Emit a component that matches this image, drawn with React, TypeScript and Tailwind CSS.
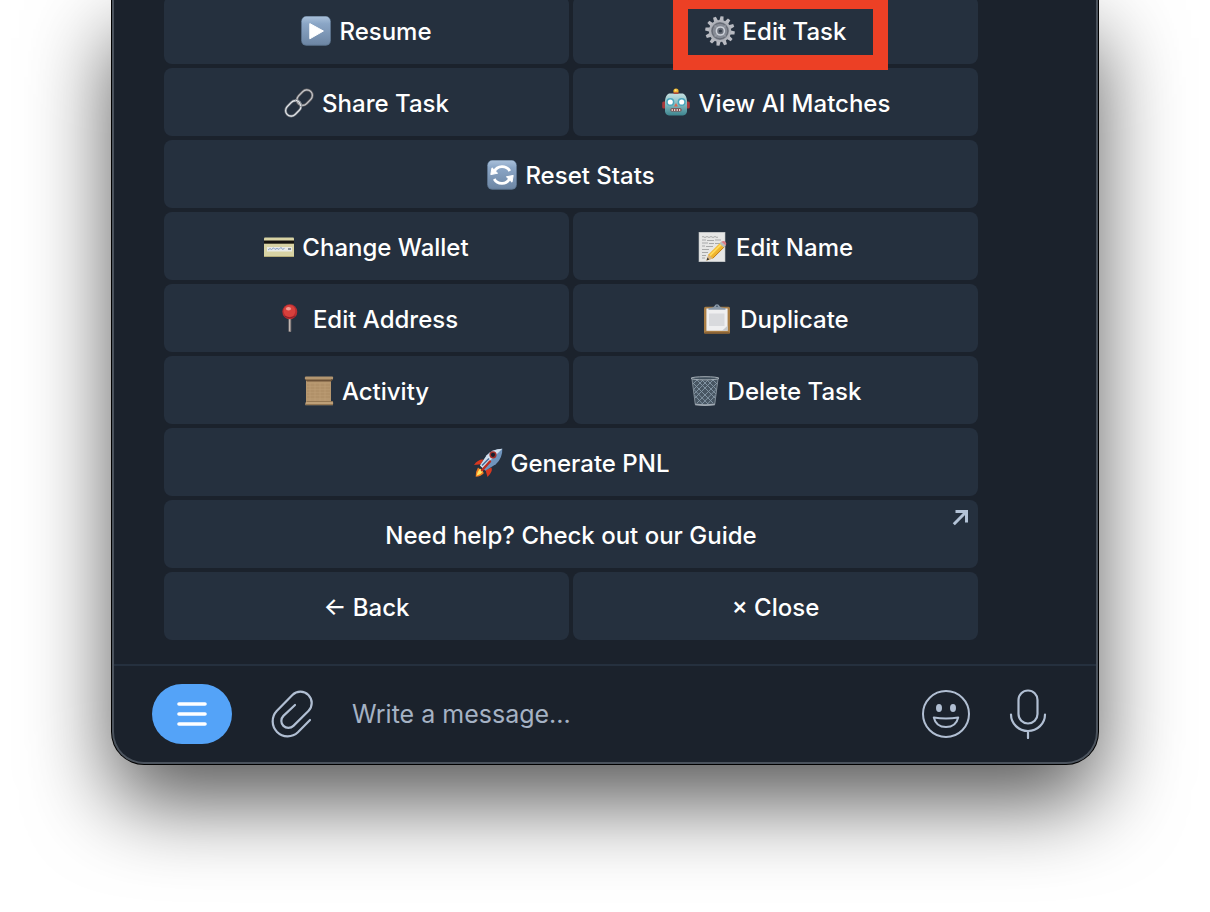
import type { ReactNode } from "react";

const Svg = ({ children }: { children: ReactNode }) => (
  <svg viewBox="0 0 30 30" className="size-[30px] shrink-0" aria-hidden="true">{children}</svg>
);

const BlueTile = ({ id, children }: { id: string; children: ReactNode }) => (
  <Svg>
    <defs>
      <linearGradient id={id} x1="0" y1="0" x2="0" y2="1">
        <stop offset="0" stopColor="#a9c0da" />
        <stop offset="0.25" stopColor="#8ba6c6" />
        <stop offset="1" stopColor="#6d86a4" />
      </linearGradient>
    </defs>
    <rect x="0.2" y="0.2" width="29.6" height="29.6" rx="5" fill="#5d7590" />
    <rect x="0.8" y="0.6" width="28.4" height="28.2" rx="4.6" fill={`url(#${id})`} />
    {children}
  </Svg>
);

const PlayIcon = () => (
  <BlueTile id="tile-play">
    <path d="M8.8 7.6 22.4 15 8.8 22.8Z" fill="#fff" stroke="#fff" strokeWidth="1" strokeLinejoin="round" />
  </BlueTile>
);

const RefreshIcon = () => (
  <BlueTile id="tile-refresh">
    <path d="M7.2 11.6A8.8 8.8 0 0 1 22.8 11M22.8 18.4A8.8 8.8 0 0 1 7.2 19" fill="none" stroke="#fff" strokeWidth="2.8" />
    <path d="M3.8 14.6 5 7.8 10.6 13.2ZM26.2 15.4 25 22.2 19.4 16.8Z" fill="#fff" stroke="#fff" strokeLinejoin="round" />
  </BlueTile>
);

const GearIcon = () => (
  <Svg>
    <g fill="#b9bbc2">
      {[0, 30, 60, 90, 120, 150, 180, 210, 240, 270, 300, 330].map((a) => (
        <path key={a} d="M12.9 5 13.5.2h3l.6 4.8Z" transform={`rotate(${a + 8} 15 15)`} />
      ))}
    </g>
    <circle cx="15" cy="15" r="10" fill="#777c86" stroke="#b0b3ba" strokeWidth="2.2" />
    <circle cx="15" cy="15" r="7.8" fill="#858a94" stroke="#656a74" strokeWidth="1" />
    <path d="m9.6 9.6 3 3m5 5 3 3M9.6 20.400l3-3m5-5 3-3" stroke="#959aa3" strokeWidth="1.4" />
    <circle cx="15.4" cy="15" r="4" fill="#686e79" stroke="#cbd0d8" strokeWidth="1.6" />
    <circle cx="15.4" cy="15" r="1.6" fill="#343e4a" />
  </Svg>
);

const LinkIcon = () => (
  <Svg>
    <g fill="none">
      <rect x="-8.6" y="-5.6" width="17.2" height="11.2" rx="5.6" transform="translate(9.3 20.4) rotate(-46)" stroke="#747a82" strokeWidth="2.6" />
      <rect x="-8.6" y="-5.6" width="17.2" height="11.2" rx="5.6" transform="translate(9.3 20.4) rotate(-46)" stroke="#eceef1" strokeWidth="1.1" />
      <rect x="-8.6" y="-5.6" width="17.2" height="11.2" rx="5.6" transform="translate(20.7 9.600) rotate(-46)" stroke="#6c6869" strokeWidth="2.6" />
      <rect x="-8.6" y="-5.6" width="17.2" height="11.2" rx="5.6" transform="translate(20.7 9.600) rotate(-46)" stroke="#c9ccd1" strokeWidth="1.1" />
      <path d="M11.500 12q5 1.200 5.700 6.500" stroke="#8c9198" strokeWidth="2.6" />
      <path d="M11.700 12q4.500 1.200 5.200 6.100" stroke="#eceef0" strokeWidth="1" />
    </g>
  </Svg>
);

const RobotIcon = () => (
  <Svg>
    <defs>
      <linearGradient id="robot-face" x1="0" y1="0" x2="0" y2="1">
        <stop offset="0" stopColor="#c4e0e1" />
        <stop offset="0.5" stopColor="#83b9bf" />
        <stop offset="1" stopColor="#3d858f" />
      </linearGradient>
    </defs>
    <rect x="1.2" y="13.5" width="4" height="7" rx="1.5" fill="#a9383b" />
    <rect x="24.8" y="13.5" width="4" height="7" rx="1.5" fill="#a9383b" />
    <path d="M8 5.4h14q3.4 1.4 4 7.2v11q-.5 3.6-4 3.8H8q-3.5-.2-4-3.8v-11q.6-5.8 4-7.2Z" fill="url(#robot-face)" />
    <circle cx="15" cy="3" r="2.6" fill="#f0b62c" />
    <circle cx="14.600" cy="2.200" r="1" fill="#ffe088" />
    <path d="M12.500 4.300h5v1.700h-5Z" fill="#a84c3f" />
    <circle cx="9.300" cy="14" r="3.300" fill="#fff" stroke="#4aa6bd" strokeWidth="1.500" />
    <circle cx="20.700" cy="14" r="3.300" fill="#fff" stroke="#4aa6bd" strokeWidth="1.500" />
    <path d="m15 15 2 3.600h-4Z" fill="#df654d" />
    <rect x="9.400" y="20.200" width="11.200" height="3.400" rx="1.500" fill="#7e4747" />
    <path d="M11.200 21v2m2.500-2v2m2.500-2v2m2.500-2v2" stroke="#f5eeea" strokeWidth="1.100" />
  </Svg>
);

const CardIcon = () => (
  <Svg>
    <rect x="0" y="5.5" width="30" height="19.5" rx="1" fill="#d8d3a4" />
    <path d="M0 8.5h30v3.200H0Z" fill="#15130f" />
    <rect x="3" y="15" width="25" height="4.500" fill="#e9ebe6" />
    <path d="m4 18 2-1.500 1.500 1 2-1.600 1.500 1.500 2-1 2 1 2-2 1.500 2 2-1" fill="none" stroke="#7d97c2" strokeWidth="0.900" />
    <path d="M24 17h3" stroke="#49576b" strokeWidth="1.200" />
    <path d="M0 24.500h30" stroke="#b4ac78" strokeWidth="1" />
  </Svg>
);

const MemoIcon = () => (
  <Svg>
    <rect x="1" y="0.2" width="26" height="29.6" fill="#e6e6e5" stroke="#bfc2c4" strokeWidth="0.6" />
    <path d="M4 5q1-1 2 0t2 0 2 0 2 0 2 0 2 0 2 0 2 0M4 8h4m1 .5h7m1-.5h6M4 11h6m1 .5h5m1 0h5M4 14h3m1 .5h7M4 17.5h7M4 20.500h6M4 23.500h4M4 26h3" fill="none" stroke="#a0a1a2" strokeWidth="0.9" />
    <path d="m8.500 28.500 2.100-6.200L22.500 10.500l4.300 4-12 12Z" fill="#efb52d" />
    <path d="m12 23.500 12-12" stroke="#ffda5b" strokeWidth="1.800" />
    <path d="m14.800 26.300 12-12" stroke="#bd7a18" strokeWidth="1" />
    <path d="m8.500 28.500 2-6 4.200 4Z" fill="#d8b685" />
    <path d="m8.500 28.500 1-3 1.800 2Z" fill="#383532" />
    <path d="m21.500 11.500 2-2 4.300 4-2 2Z" fill="#b9bdbf" />
    <path d="m23.300 9.700q2.500-1.700 4.200.2 1.600 1.800.2 3.500Z" fill="#dc7b82" />
  </Svg>
);

const PinIcon = () => (
  <Svg>
    <path d="M13.500 14h2.700v13.500q-1.300 1-2.700 0Z" fill="#8d8483" />
    <path d="M14.500 15v12" stroke="#c7bdb8" strokeWidth="0.9" />
    <circle cx="14.800" cy="7.700" r="7.500" fill="#b92d30" />
    <circle cx="14.500" cy="7" r="5.900" fill="#d8403c" />
    <ellipse cx="13.500" cy="4.800" rx="2.600" ry="1.800" fill="#f39a91" />
    <path d="M9.500 12q5.300 3.500 10.600 0" fill="none" stroke="#8e2028" strokeWidth="1" />
  </Svg>
);

const ClipboardIcon = () => (
  <Svg>
    <rect x="2" y="2.700" width="26" height="27" rx="1.500" fill="#a87d45" />
    <path d="M2.500 29h25" stroke="#79552e" strokeWidth="1.200" />
    <rect x="4.400" y="4.500" width="21.200" height="22.300" fill="#efeff0" />
    <rect x="7" y="9.500" width="15.500" height="12.500" fill="#d9dadd" />
    <path d="m20 26.800 5.600-5v5Z" fill="#c6c9cc" />
    <path d="M6.500 5.800V4q4.800 0 5.800-1.700Q13 .2 15 .2t2.700 2.100Q18.700 4 23.500 4v1.800Z" fill="#8998a8" />
    <circle cx="15" cy="2.200" r="0.800" fill="#36495b" />
  </Svg>
);

const ScrollIcon = () => (
  <Svg>
    <path d="M2 3h25v24H2Z" fill="#b6976f" />
    <path d="M3 9h23M3 12h23M3 15h23M3 18h23M3 21h23" stroke="#a2835b" strokeWidth="0.5" />
    <path d="M6 7v18m5-18v18m5-18v18m5-18v18" stroke="#c1a37b" strokeWidth="0.5" />
    <path d="M1.500.6h27q1 .2.500 3H1Q.3 1.400 1.500.6Z" fill="#b39670" />
    <path d="M1 3.400h28l-2 2H3Z" fill="#6c5238" />
    <path d="M2.500 25.200h26.300q.8 2 .1 4H1.400q-1-2 1.100-4Z" fill="#bd9f77" />
    <path d="M2 28.500h27M2.500 25.500h26" stroke="#8a6d4a" strokeWidth="0.8" />
  </Svg>
);

const TrashIcon = () => (
  <Svg>
    <path d="M2 3h26l-3.200 26q-9.800 1.500-19.600 0Z" fill="#485663" />
    <g fill="none" stroke="#8799a8" strokeWidth="0.9">
      <path d="m3 7 20 20M3.500 13 18 28M4.500 19l8 9M6 3l19 19M11 3l15 15M16 3l11 11M22 3l5 5M27 7 7 27M26.500 13 12 28M25.500 19l-8 9M24 3 5 22M19 3 4 18M14 3 3 14M8 3 3 8" />
    </g>
    <path d="m2 3 3.300 25.500m22.700-25.500-3.300 25.500" stroke="#7f8b96" strokeWidth="1" />
    <ellipse cx="15" cy="2.300" rx="14" ry="1.600" fill="#41505d" stroke="#a4adb5" strokeWidth="1" />
    <path d="M5.200 27.500q9.800 1.500 19.600 0v1.700q-9.800 1.400-19.600 0Z" fill="#a1aab3" />
  </Svg>
);

const RocketIcon = () => (
  <Svg>
    <path d="M10.500 11.500Q5 11 1 17l7-.7ZM18.500 19.500q1.500 4-4 9.500l-2-7Z" fill="#d83820" />
    <path d="m5 19.500 6 5.500q-3 3.500-8.300 3.800Q2.500 23.500 5 19.500Z" fill="#f27b20" />
    <path d="m7 20.500 3 3q-2 3-6.500 4.300Q4.500 23.500 7 20.500Z" fill="#ffe663" />
    <path d="M29.300.7q-9.800.3-15.600 6.500L7 17.500l5.300 5.300 10.500-6.500Q29.700 9.900 29.300.7Z" fill="#6f94bd" />
    <path d="M29.300.7q-9.800.3-15.600 6.500L7 17.500l2.600 2.600Z" fill="#d3dfec" />
    <path d="m9 17.500 7-7" stroke="#456b98" strokeWidth="1.6" />
    <circle cx="20" cy="6.800" r="3.600" fill="#a12d27" />
    <circle cx="20" cy="6.800" r="2.100" fill="#172030" />
    <path d="m17 13.500-8 8.800" stroke="#bd2e20" strokeWidth="2.400" strokeLinecap="round" />
  </Svg>
);

type Action = { label: string; icon?: ReactNode; wide?: boolean; external?: boolean; highlighted?: boolean };

const actions: Action[] = [
  { label: "Resume", icon: <PlayIcon /> },
  { label: "Edit Task", icon: <GearIcon />, highlighted: true },
  { label: "Share Task", icon: <LinkIcon /> },
  { label: "View AI Matches", icon: <RobotIcon /> },
  { label: "Reset Stats", icon: <RefreshIcon />, wide: true },
  { label: "Change Wallet", icon: <CardIcon /> },
  { label: "Edit Name", icon: <MemoIcon /> },
  { label: "Edit Address", icon: <PinIcon /> },
  { label: "Duplicate", icon: <ClipboardIcon /> },
  { label: "Activity", icon: <ScrollIcon /> },
  { label: "Delete Task", icon: <TrashIcon /> },
  { label: "Generate PNL", icon: <RocketIcon />, wide: true },
  { label: "Need help? Check out our Guide", wide: true, external: true },
  { label: "← Back" },
  { label: "× Close" },
];

function ActionButton({ label, icon, wide, external, highlighted }: Action) {
  return (
    <button
      type="button"
      className={`relative flex h-[68px] items-center justify-center gap-2 rounded-lg bg-[#25303e] pt-0.5 text-2xl font-medium text-white ${wide ? "col-span-2" : ""}`}
    >
      {icon}
      <span className="pt-0.5">{label}</span>
      {highlighted && (
        <span className="absolute -top-0.5 right-[90px] left-[100px] z-10 h-[76px] border-[15px] border-[#ec4025]" />
      )}
      {external && (
        <svg viewBox="0 0 16 16" className="absolute top-2.5 right-2.5 size-4" fill="none" stroke="#b4c3d7" strokeWidth="3" aria-hidden="true">
          <path d="M3.500 1.500h11v11M14 2 1.800 14.200" />
        </svg>
      )}
    </button>
  );
}

export default function App() {
  return (
    <main className="overflow-hidden bg-white pb-[148px] font-['Inter','Liberation_Sans',sans-serif]">
      <section className="mx-28 rounded-b-[32px] border-2 border-t-0 border-[#4b535d] bg-[#1b222c] shadow-[0_0_0_1px_#000,0_38px_84px_rgba(0,0,0,0.66)]">
        <div className="flex flex-col pr-[118px] pb-6 pl-[50px]">
          <div className="-mt-1 grid grid-cols-2 gap-1">
            {actions.map((action) => (
              <ActionButton key={action.label} {...action} />
            ))}
          </div>
        </div>
        <form className="flex h-[98px] items-center border-t-2 border-[#25303e] pr-12 pl-[38px]" onSubmit={(e) => e.preventDefault()}>
          <button type="button" aria-label="Menu" className="flex h-[60px] w-20 shrink-0 items-center justify-center rounded-[30px] bg-[#54a3f8]">
            <svg viewBox="0 0 30 24" className="h-6 w-[30px]" stroke="#fff" strokeWidth="3.600" strokeLinecap="round">
              <path d="M2 2h26M2 12h26M2 22h26" />
            </svg>
          </button>
          <button type="button" aria-label="Attach file" className="ml-9 shrink-0">
            <svg viewBox="0 0 48 48" className="size-12" fill="none" stroke="#b1bfd3" strokeWidth="2.200" strokeLinecap="round">
              <path d="M42 30 29.900 42.300A15 15 0 0 1 8.700 21.100L24.400 5A11.300 11.300 0 0 1 40.400 21L25.400 35.900A7 7 0 0 1 15.400 25.900L27 15" />
            </svg>
          </button>
          <input
            aria-label="Message"
            placeholder="Write a message..."
            className="ml-9 min-w-0 flex-1 bg-transparent pt-0.5 text-[25px] text-white outline-none placeholder:text-[#a5b2c4]"
          />
          <button type="button" aria-label="Emoji" className="shrink-0">
            <svg viewBox="0 0 50 50" className="size-[50px]" fill="none" stroke="#b1bfd3" strokeWidth="2">
              <circle cx="25" cy="25" r="23" />
              <ellipse cx="18" cy="19" rx="3" ry="4" fill="#b1bfd3" stroke="none" />
              <ellipse cx="32" cy="19" rx="3" ry="4" fill="#b1bfd3" stroke="none" />
              <path d="M12.800 28.500q12.200 2 24.400 0Q35 38 25 38t-12.200-9.500Z" strokeLinejoin="round" />
            </svg>
          </button>
          <button type="button" aria-label="Record voice message" className="ml-[37px] shrink-0">
            <svg viewBox="0 0 40 50" className="h-[50px] w-10" fill="none" stroke="#b1bfd3" strokeWidth="2.200" strokeLinecap="round">
              <rect x="10.500" y="1.500" width="19" height="33" rx="9.500" />
              <path d="M3 25.500a17 16.500 0 0 0 34 0M20 42v7" />
            </svg>
          </button>
        </form>
      </section>
    </main>
  );
}
